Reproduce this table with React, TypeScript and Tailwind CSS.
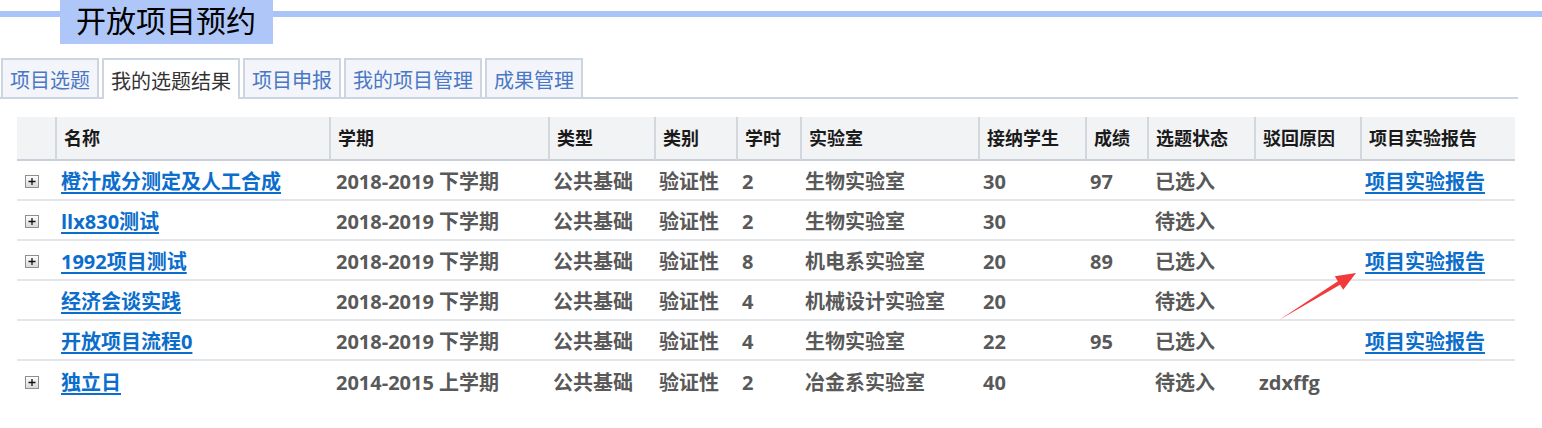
import React from "react";

type Row = {
  name: string;
  term: string;
  kind: string;
  category: string;
  hours: string;
  lab: string;
  students: string;
  score: string;
  status: string;
  reason: string;
  report: boolean;
  expandable: boolean;
};

const tabs = ["项目选题", "我的选题结果", "项目申报", "我的项目管理", "成果管理"];
const activeTab = 1;

const columns = [
  { label: "", width: "w-[38px]" },
  { label: "名称", width: "w-[274px]" },
  { label: "学期", width: "w-[219px]" },
  { label: "类型", width: "w-[106px]" },
  { label: "类别", width: "w-[82px]" },
  { label: "学时", width: "w-[64px]" },
  { label: "实验室", width: "w-[178px]" },
  { label: "接纳学生", width: "w-[107px]" },
  { label: "成绩", width: "w-[62px]" },
  { label: "选题状态", width: "w-[107px]" },
  { label: "驳回原因", width: "w-[106px]" },
  { label: "项目实验报告", width: "w-[155px]" }
];

const rows: Row[] = [
  { name: "橙汁成分测定及人工合成", term: "2018-2019 下学期", kind: "公共基础", category: "验证性", hours: "2", lab: "生物实验室", students: "30", score: "97", status: "已选入", reason: "", report: true, expandable: true },
  { name: "llx830测试", term: "2018-2019 下学期", kind: "公共基础", category: "验证性", hours: "2", lab: "生物实验室", students: "30", score: "", status: "待选入", reason: "", report: false, expandable: true },
  { name: "1992项目测试", term: "2018-2019 下学期", kind: "公共基础", category: "验证性", hours: "8", lab: "机电系实验室", students: "20", score: "89", status: "已选入", reason: "", report: true, expandable: true },
  { name: "经济会谈实践", term: "2018-2019 下学期", kind: "公共基础", category: "验证性", hours: "4", lab: "机械设计实验室", students: "20", score: "", status: "待选入", reason: "", report: false, expandable: false },
  { name: "开放项目流程0", term: "2018-2019 下学期", kind: "公共基础", category: "验证性", hours: "4", lab: "生物实验室", students: "22", score: "95", status: "已选入", reason: "", report: true, expandable: false },
  { name: "独立日", term: "2014-2015 上学期", kind: "公共基础", category: "验证性", hours: "2", lab: "冶金系实验室", students: "40", score: "", status: "待选入", reason: "zdxffg", report: false, expandable: true }
];

function PlusBox() {
  return (
    <svg width="14" height="13" viewBox="0 0 14 13" className="block">
      <defs>
        <linearGradient id="pb" x1="0" y1="0" x2="0" y2="1">
          <stop offset="0" stopColor="#ffffff" />
          <stop offset="1" stopColor="#d8d8d8" />
        </linearGradient>
      </defs>
      <rect x="0.5" y="0.5" width="13" height="12" fill="url(#pb)" stroke="#8f8f8f" />
      <path d="M3.5 6.5h7M7 3v7" stroke="#111" strokeWidth="1.3" />
    </svg>
  );
}

export default function App() {
  return (
    <div className="relative h-[428px] w-[1542px] overflow-hidden bg-white font-['Open_Sans','Noto_Sans_CJK_SC',sans-serif]">
      {/* page title on the blue rule */}
      <div className="flex items-start">
        <div className="mt-[11px] h-[6px] w-[60px] bg-[#a8c4f8]" />
        <div className="flex h-[44px] w-[213px] items-center bg-[#aec7f8] pl-[16px] font-['Liberation_Serif','Noto_Sans_CJK_SC',serif] text-[30px] leading-none text-black">
          开放项目预约
        </div>
        <div className="mt-[11px] h-[6px] flex-1 bg-[#a8c4f8]" />
      </div>

      {/* tabs */}
      <div className="mt-[14px] flex h-[41px] w-[1518px] items-start gap-[3px] border-b-2 border-[#cdd5e1] pl-[1px] font-['Noto_Sans_CJK_SC',sans-serif]">
        {tabs.map((t, i) =>
          i === activeTab ? (
            <div
              key={t}
              className="flex h-[41px] items-center border-2 border-b-0 border-[#cdd5e1] bg-white px-[7px] pt-[3px] text-[20px] leading-none text-[#333]"
            >
              {t}
            </div>
          ) : (
            <div
              key={t}
              className="flex h-[39px] items-center border-2 border-b-0 border-[#cdd5e1] bg-[#f3f5fa] px-[7px] pt-[3px] text-[20px] leading-none text-[#4a78c4]"
            >
              {t}
            </div>
          )
        )}
      </div>

      {/* result table */}
      <table className="ml-[17px] mt-[18px] w-[1498px] table-fixed border-separate border-spacing-0">
        <colgroup>
          {columns.map((c, i) => (
            <col key={i} className={c.width} />
          ))}
        </colgroup>
        <thead>
          <tr>
            {columns.map((c, i) => (
              <th
                key={i}
                className={`h-[44px] border-b-2 border-[#c9d0da] bg-[#f2f3f5] text-left align-middle text-[18px] font-bold leading-none text-[#1a1a1a] ${
                  i === 0 ? "" : "border-l-2 border-l-[#d3d7de] pl-[7px]"
                }`}
              >
                {c.label}
              </th>
            ))}
          </tr>
        </thead>
        <tbody className="text-[20px] font-bold leading-none text-[#595959]">
          {rows.map((r, idx) => {
            const last = idx === rows.length - 1;
            const cell = `h-[40px] align-middle px-[6px] pt-[3px] ${last ? "" : "border-b-2 border-[#e2e5ea]"}`;
            return (
              <tr key={r.name}>
                <td className={`${cell} pl-[8px]`}>{r.expandable && <PlusBox />}</td>
                <td className={cell}>
                  <a href="#" className="text-[#0b6dcc] underline decoration-2 underline-offset-[3px]">
                    {r.name}
                  </a>
                </td>
                <td className={`${cell} pl-[7px]`}>{r.term}</td>
                <td className={`${cell} pl-[5px]`}>{r.kind}</td>
                <td className={`${cell} pl-[5px]`}>{r.category}</td>
                <td className={cell}>{r.hours}</td>
                <td className={`${cell} pl-[5px]`}>{r.lab}</td>
                <td className={`${cell} pl-[5px]`}>{r.students}</td>
                <td className={`${cell} pl-[5px]`}>{r.score}</td>
                <td className={`${cell} pl-[8px]`}>{r.status}</td>
                <td className={`${cell} pl-[5px]`}>{r.reason}</td>
                <td className={`${cell} pl-[5px]`}>
                  {r.report && (
                    <a href="#" className="text-[#0b6dcc] underline decoration-2 underline-offset-[3px]">
                      项目实验报告
                    </a>
                  )}
                </td>
              </tr>
            );
          })}
        </tbody>
      </table>

      {/* red annotation arrow */}
      <svg className="pointer-events-none absolute left-0 top-0" width="1542" height="428" viewBox="0 0 1542 428">
        <polygon
          points="1279,320 1337.9,281.3 1334.8,276.2 1356,273 1343.2,289.8 1340.1,284.7"
          fill="#f23a3a"
        />
      </svg>
    </div>
  );
}
